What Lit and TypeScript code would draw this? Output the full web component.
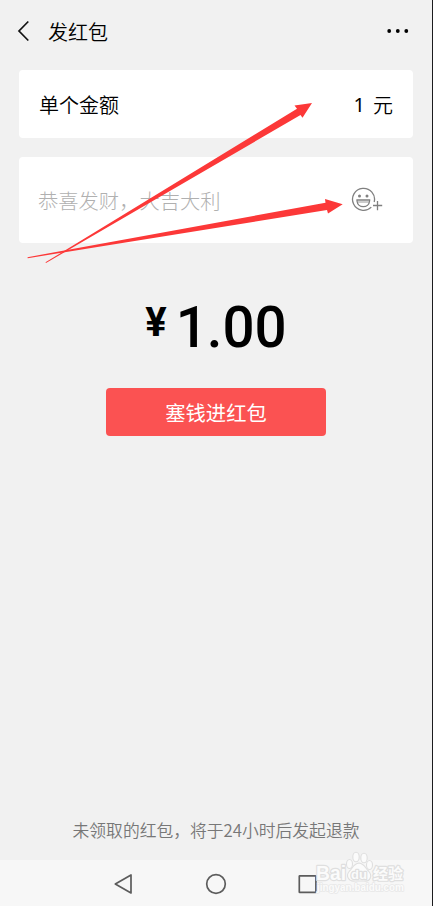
import { LitElement, html, css, svg } from 'lit';
import { customElement } from 'lit/decorators.js';

@customElement('app-root')
export class AppRoot extends LitElement {
  static styles = css`
    :host {
      display: flex;
      flex-direction: column;
      position: relative;
      box-sizing: border-box;
      height: 906px;
      width: 433px;
      overflow: hidden;
      background: #f1f1f1;
      border-right: 1px solid #1c1c1e;
      color: #000;
      font: 20px/30px 'Noto Sans CJK SC', sans-serif;
      font-weight: 350;
    }
    svg { display: block; }
    .header {
      display: flex;
      align-items: center;
      height: 62px;
      padding: 0 23px 0 17px;
    }
    .title { flex: 1; margin-left: 18px; padding-top: 2px; }
    .card {
      display: flex;
      align-items: center;
      justify-content: space-between;
      box-sizing: border-box;
      margin: 0 19px;
      padding: 0 20px;
      border-radius: 4px;
      background: #fff;
    }
    .amount { height: 68px; margin-top: 8px; padding-top: 2px; }
    .value { display: flex; gap: 8px; }
    .digit { font-family: 'Noto Sans', sans-serif; font-weight: 400; }
    .wish { height: 86px; margin-top: 19px; padding-right: 29px; }
    .hint { color: #b0b0b0; font-size: 20.3px; font-weight: 300; margin-left: -1px; }
    .total {
      display: flex;
      justify-content: center;
      align-items: flex-start;
      height: 67px;
      margin-top: 51px;
      font-family: Roboto, sans-serif;
      font-weight: 500;
    }
    .yen { font-size: 40px; line-height: 57px; font-weight: 700; }
    .sum { font-size: 56.5px; line-height: 68px; margin-left: 9px; }
    .whole { margin-right: -1px; }
    .pay {
      align-self: center;
      width: 220px;
      height: 48px;
      margin-top: 27px;
      padding: 0;
      border: 0;
      border-radius: 4px;
      background: #fb5252;
      color: #fff;
      font: 400 20.3px/48px 'Noto Sans CJK SC', sans-serif;
    }
    .note {
      margin-top: auto;
      margin-bottom: 15px;
      text-align: center;
      color: #777;
      font-size: 16.8px;
    }
    .nav {
      display: flex;
      box-sizing: border-box;
      height: 46px;
      align-items: center;
      background: #f7f7f7;
      padding: 2px 0 0 113px;
      gap: 71px;
    }
    .arrows, .mark { position: absolute; pointer-events: none; }
    .arrows { left: 0; top: 0; }
    .mark { left: 312px; top: 848px; }
    .mark text { paint-order: stroke; stroke-width: 2.4px; stroke-linejoin: round; }
    .latin { font: 700 20px 'Liberation Sans', sans-serif; }
    .du { font: 700 13px 'Liberation Sans', sans-serif; }
    .han { font: 700 15px 'Noto Sans CJK SC', sans-serif; }
    .mark .url { font: 700 10px 'Liberation Sans', sans-serif; stroke: #e8e8e8; stroke-width: 1.6px; }
  `;

  private arrows() {
    return svg`<svg class="arrows" width="432" height="280" fill="#fc3838">
      <path d="M45.5 262.3 L297 108.800 L294.500 105.500 L312 103 L302.500 117.700 L300.500 115 L46 263 Z"/>
      <path d="M27.500 257.200 L325.500 202.800 L325 199 L342.700 204.300 L328 213.600 L327 210 L27.700 258.200 Z"/>
    </svg>`;
  }

  private watermark() {
    return svg`<svg class="mark" width="96" height="50" fill="#fbfbfb" stroke="#dfdfdf" stroke-width="1.100">
      <text class="latin" x="4" y="32" textLength="30" lengthAdjust="spacingAndGlyphs">Bai</text>
      <path d="M47 15 C41 16 41 20 37.500 23 C33 28 37 34 43 33 H52 C58 34 61 28 56.500 23 C53 20 53 16 47 15Z"/>
      <ellipse cx="37.500" cy="16" rx="3" ry="4.500"/>
      <ellipse cx="44" cy="9" rx="3.200" ry="4.800"/>
      <ellipse cx="52" cy="10" rx="3.200" ry="4.800"/>
      <ellipse cx="57.500" cy="17" rx="3" ry="4.500"/>
      <text class="du" x="39" y="30.500" textLength="16">du</text>
      <text class="han" x="61" y="31">经验</text>
      <text class="url" x="5" y="43" textLength="87">jingyan.baidu.com</text>
    </svg>`;
  }

  render() {
    return html`
      <div class="header">
        <svg width="13" height="22" fill="none" stroke="#111" stroke-width="1.7">
          <path d="M11.300 1.500 L2 11 L11.300 20.500"/>
        </svg>
        <span class="title">发红包</span>
        <svg width="22" height="4"><circle cx="2.200" cy="2" r="1.900"/><circle cx="10.800" cy="2" r="1.900"/><circle cx="19.300" cy="2" r="1.900"/></svg>
      </div>
      <div class="card amount">
        <span>单个金额</span>
        <span class="value"><span class="digit">1</span><span>元</span></span>
      </div>
      <div class="card wish">
        <span class="hint">恭喜发财，大吉大利</span>
        <svg width="33" height="26" fill="none" stroke="#808080" stroke-width="1.300">
          <path d="M23.200 15 A11 11 0 1 0 20.300 20.100"/>
          <path d="M6 13 H18.600 V14 C18 21.400 6.600 21.400 6 14Z"/>
          <path d="M6.500 15 H18.100" stroke-width=".8"/>
          <circle cx="8.500" cy="9" r="1.500" fill="#808080" stroke="none"/>
          <circle cx="16" cy="9" r="1.500" fill="#808080" stroke="none"/>
          <path d="M22 18.500 H31.200 M26.500 14 V23.300"/>
        </svg>
      </div>
      <div class="total"><span class="yen">¥</span><span class="sum"><span class="whole">1</span>.00</span></div>
      <button class="pay">塞钱进红包</button>
      <div class="note">未领取的红包，将于24小时后发起退款</div>
      <div class="nav">
        <svg width="21" height="22" fill="none" stroke="#5c5c5c" stroke-width="1.700" stroke-linejoin="round"><path d="M18 2 V20 L2.300 11Z"/></svg>
        <svg width="22" height="22" fill="none" stroke="#5c5c5c" stroke-width="1.700"><circle cx="11" cy="11" r="9.300"/></svg>
        <svg width="20" height="20" fill="none" stroke="#5c5c5c" stroke-width="1.700"><rect x="1.300" y="1.800" width="16.600" height="16.600" rx=".5"/></svg>
      </div>
      ${this.arrows()}${this.watermark()}
    `;
  }
}
